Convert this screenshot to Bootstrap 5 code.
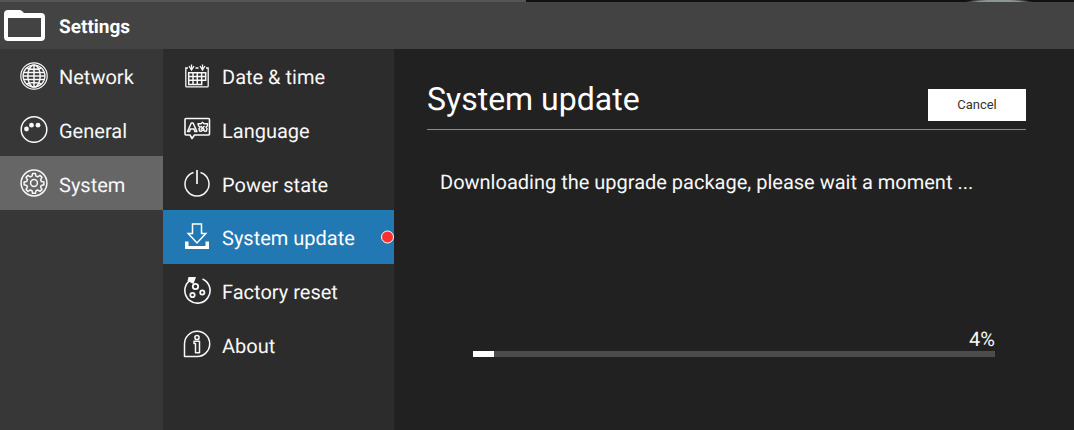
<!DOCTYPE html>
<html lang="en" data-bs-theme="dark">
<head>
<meta charset="utf-8">
<meta name="viewport" content="width=device-width, initial-scale=1">
<title>Settings</title>
<link href="https://cdn.jsdelivr.net/npm/bootstrap@5.3.0/dist/css/bootstrap.min.css" rel="stylesheet">
<style>
  body { font-family: Roboto, "Liberation Sans", sans-serif; font-size: 20px; line-height: 24px; text-rendering: geometricPrecision; color: #f8f8f8; background: #212121; }
  /* sliver of wallpaper above the window */
  .backdrop { height: 2px; background: radial-gradient(34px 3px at 93% 2px, #8d9494 60%, transparent), linear-gradient(90deg, #555 49%, #111 49%); }
  .titlebar { height: 47px; background: #434343; padding-left: 3px; gap: 13px; }
  .titlebar h1 { font-size: 19px; line-height: 24px; padding-top: 2px; }
  .pane-main { width: 163px; background: #373737; }
  .pane-sub { width: 231px; background: #2c2c2c; }
  .menu { display: grid; grid-template-rows: repeat(6, 1fr); min-height: 322px; }
  .menu a { padding: 3px 0 0 20px; gap: 11px; color: #f8f8f8; }
  .pane-main a.active { background: #666; }
  .pane-sub a.active { background: #2178b3; color: #fff; }
  .menu svg { width: 28px; height: 28px; margin-bottom: 3px; fill: none; stroke: currentColor; stroke-width: 1.5; flex: none; }
  .notice { width: 13px; height: 13px; background: #fb3131; border: 1px solid #fff; }
  .detail { padding: 32px 48px 24px 33px; }
  .detail-head { border-bottom: 1px solid #8a8a8a; padding-bottom: 8px; }
  .detail-head h2 { font-size: 32px; line-height: 36px; }
  .btn-cancel { width: 98px; height: 32px; font-size: 13px; line-height: 16px; color: #333; background: #fff; border: 0; border-radius: 0; }
  .btn-cancel:hover { background: #ddd; color: #222; }
  .message { padding-left: 13px; margin: 40px 0 0; }
  .download { margin: 133px 31px 0 46px; }
  .download .progress { height: 6px; border-radius: 0; background: #4c4c4c; }
  .download .progress-bar { background: #fff; }
</style>
</head>
<body>
<div class="min-vh-100 d-flex flex-column">
  <div class="backdrop"></div>
  <header class="titlebar d-flex align-items-center">
    <svg width="43" height="34" viewBox="0 0 43 34" aria-hidden="true"><path fill="#fff" fill-rule="evenodd" d="M5 1H16Q18 1 19 2L21 4H38Q42 4 42 8V28Q42 32 38 32H5Q1 32 1 28V5Q1 1 5 1ZM5 9V28H38V9Z"/></svg>
    <h1 class="fw-bold text-white m-0">Settings</h1>
  </header>
  <div class="d-flex flex-grow-1">
    <nav class="pane-main flex-shrink-0" aria-label="Categories">
      <div class="menu">
        <a href="#network" class="d-flex align-items-center text-decoration-none">
          <svg viewBox="0 0 28 28"><circle stroke-width="1.200" cx="14" cy="14" r="13.200"/><circle stroke-width="1.200" cx="14" cy="14" r="11"/><ellipse cx="14" cy="14" rx="6.200" ry="11"/><path d="M14 3v22M3 14h22M4 10.500h20M4 17.500h20M6.500 6q7.500 3 15 0M6.500 22q7.500-3 15 0"/></svg>
          <span>Network</span></a>
        <a href="#general" class="d-flex align-items-center text-decoration-none">
          <svg viewBox="0 0 28 28"><circle cx="14" cy="14.500" r="12.800"/><g fill="currentColor" stroke="none"><circle cx="6.500" cy="14" r="2.400"/><circle cx="11.500" cy="10.200" r="2.400"/><circle cx="18" cy="10.200" r="2.400"/></g></svg>
          <span>General</span></a>
        <a href="#system" class="active d-flex align-items-center text-decoration-none" aria-current="true">
          <svg viewBox="0 0 28 28"><circle cx="14" cy="14" r="12.900"/><circle cx="14" cy="14" r="3.400"/><path stroke-linejoin="round" d="M12.600 4.500h2.800l.6 2.600 1.700.7 2.300-1.400 2 2-1.400 2.300.7 1.700 2.600.6v2.800l-2.600.6-.7 1.700 1.400 2.300-2 2-2.300-1.400-1.700.7-.6 2.600h-2.800l-.6-2.600-1.700-.7L8 22.400l-2-2 1.400-2.300-.7-1.700-2.600-.6V13l2.600-.6.7-1.700L6 8.400l2-2 2.300 1.400 1.700-.7z"/></svg>
          <span>System</span></a>
      </div>
    </nav>
    <nav class="pane-sub flex-shrink-0" aria-label="System settings">
      <div class="menu">
        <a href="#date" class="d-flex align-items-center text-decoration-none">
          <svg viewBox="0 0 28 28"><path stroke-width="1.300" d="M5 6H2.800V24q0 .9.900.9H24.300q.9 0 .9-.9V6H23M12.500 6h3"/><path stroke-width="1.300" d="M6 4l2.500 4L11 4M8.500 2.500v5.500M17 4l2.500 4L22 4M19.500 2.500v5.500"/><path stroke-width="1.500" d="M5.700 10.700h17v7.500h-4V22.500h-13zM5.700 14.500h17M5.700 18.300h13M10 10.700v12M14.300 10.700v12M18.600 10.700v8"/></svg>
          <span>Date &amp; time</span></a>
        <a href="#language" class="d-flex align-items-center text-decoration-none">
          <svg viewBox="0 0 28 28"><path stroke-width="1.600" stroke-linejoin="round" d="M3 3.500h22.500q1 0 1 1v14.500q0 1-1 1H11.500L9 23.500l-2-3.500H3q-1 0-1-1V4.500q0-1 1-1z"/><path stroke-width="1.500" stroke-linejoin="round" d="M4.500 16.500L8.300 8h1.800l3.800 8.500h-2.100l-.8-2.500H7.400l-.8 2.500z"/><path stroke-width="1.400" stroke-linejoin="round" d="M15 8.800h3l1.500-1.500 1.500 1.500h3.500v2l-1.500 1.200 1 1.500-.5 2.500-1.500.3-2-1.300-2 1.300-1.500-.3-.5-2.500 1-1.500-1.500-1.200zM17.700 11l3.800 3.800M21.500 11l-3.800 3.800"/></svg>
          <span>Language</span></a>
        <a href="#power" class="d-flex align-items-center text-decoration-none">
          <svg viewBox="0 0 28 28"><path d="M10.500 3.500a12 12 0 1 0 7 0"/><path stroke-width="1.700" d="M14 1v14"/></svg>
          <span>Power state</span></a>
        <a href="#update" class="active position-relative d-flex align-items-center text-decoration-none" aria-current="page">
          <svg viewBox="0 0 28 28"><path d="M9.500 1v9.500H5.200L14 20l8.800-9.500h-4.300V1z"/><path stroke="none" fill="currentColor" d="M2 18.500h3.500V23h17v-4.500H26V26H2z"/></svg>
          <span>System update</span>
          <i class="notice rounded-circle position-absolute top-50 end-0 translate-middle-y" aria-label="Update available"></i></a>
        <a href="#reset" class="d-flex align-items-center text-decoration-none">
          <svg viewBox="0 0 28 28"><path stroke-width="1.600" d="M19.500 3a12.600 12.600 0 1 1-13.300 2"/><path fill="currentColor" stroke="none" d="M5.500 1H13L10.500 8 4.500 5z"/><g stroke-width="1.800"><circle cx="12.500" cy="10.500" r="2.700"/><circle cx="19.300" cy="16.500" r="2.100"/><circle cx="9.500" cy="19" r="2.200"/></g></svg>
          <span>Factory reset</span></a>
        <a href="#about" class="d-flex align-items-center text-decoration-none">
          <svg viewBox="0 0 28 28"><path stroke-linejoin="round" d="M1.500 26.500V13.800A12.600 12.600 0 1 1 14 26.500z"/><circle cx="14" cy="7.500" r="2.100"/><path stroke-linejoin="round" d="M11 11.300h5.500v11.500H12.500v-9.300H11z"/></svg>
          <span>About</span></a>
      </div>
    </nav>
    <main class="detail flex-grow-1">
      <div class="detail-head d-flex justify-content-between align-items-end">
        <h2 class="fw-normal text-white m-0 mb-1">System update</h2>
        <button type="button" class="btn btn-cancel p-0">Cancel</button>
      </div>
      <p class="message">Downloading the upgrade package, please wait a moment ...</p>
      <div class="download">
        <div class="text-end">4%</div>
        <div class="progress" role="progressbar" aria-label="Download" aria-valuenow="4" aria-valuemin="0" aria-valuemax="100"><div class="progress-bar" style="width:4%"></div></div>
      </div>
    </main>
  </div>
</div>
<script src="https://cdn.jsdelivr.net/npm/bootstrap@5.3.0/dist/js/bootstrap.bundle.min.js"></script>
</body>
</html>
